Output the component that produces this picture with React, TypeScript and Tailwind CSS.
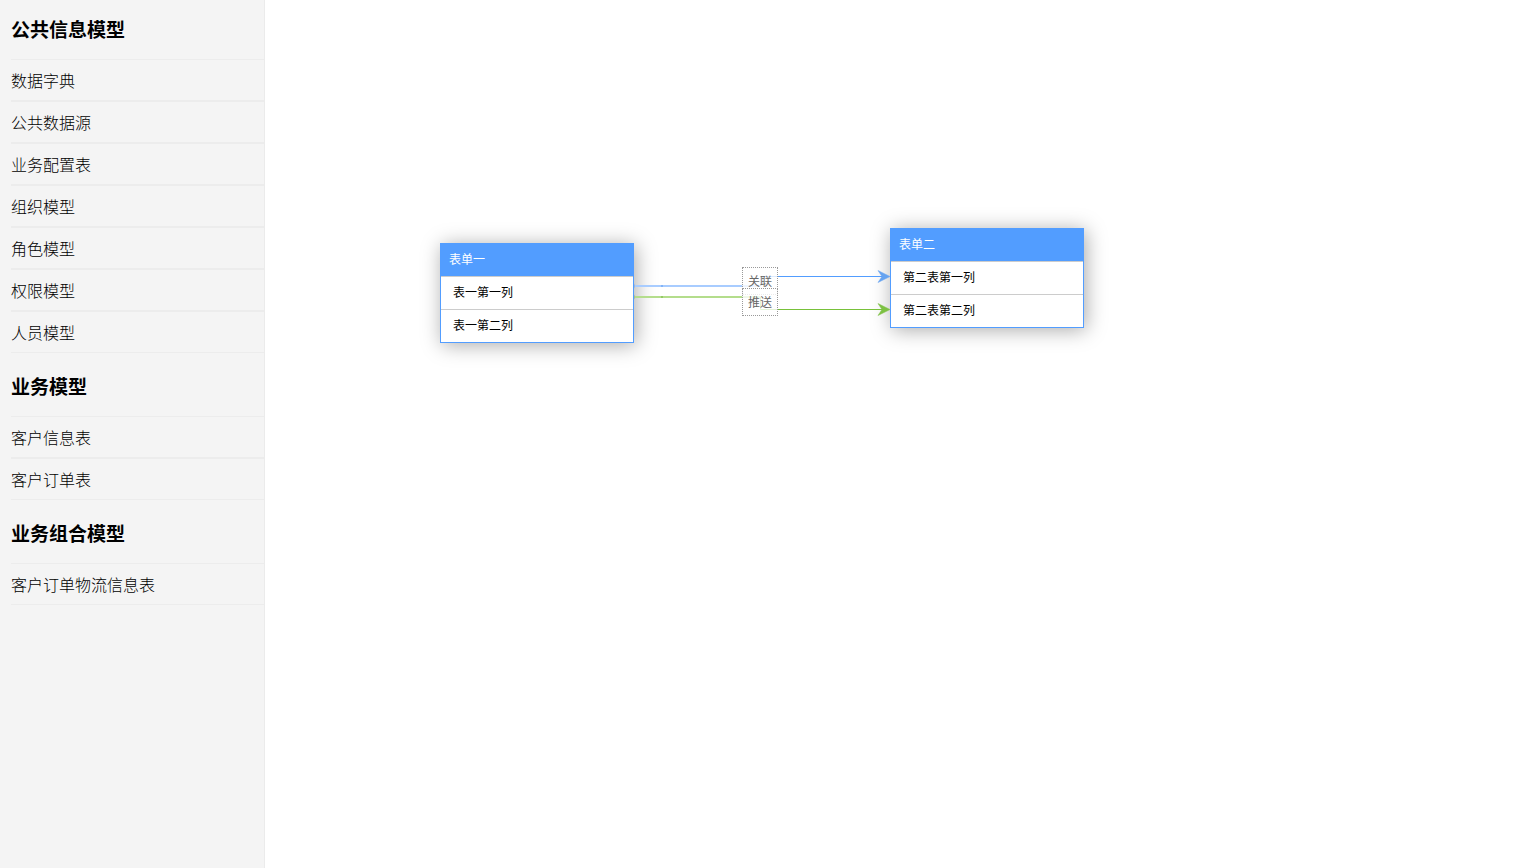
const groups = [
  {
    title: "公共信息模型",
    items: ["数据字典", "公共数据源", "业务配置表", "组织模型", "角色模型", "权限模型", "人员模型"],
  },
  { title: "业务模型", items: ["客户信息表", "客户订单表"] },
  { title: "业务组合模型", items: ["客户订单物流信息表"] },
]

function Sidebar() {
  return (
    <aside className="flex w-[265px] shrink-0 flex-col border-r border-[#ebebeb] bg-[#f4f4f4] pl-[11px]">
      {groups.map((group) => (
        <section key={group.title} className="flex flex-col pt-1 first:pt-0">
          <h3 className="flex h-[59px] items-center text-[19px] font-bold">{group.title}</h3>
          <ul className="flex flex-col">
            {group.items.map((item) => (
              <li key={item} className="flex h-[42px] items-center border-y border-[#ececec] text-base font-light">
                {item}
              </li>
            ))}
          </ul>
        </section>
      ))}
    </aside>
  )
}

type TableNodeProps = { title: string; columns: string[]; className: string }

function TableNode({ title, columns, className }: TableNodeProps) {
  return (
    <div
      className={`absolute flex w-[194px] flex-col border border-[#529dff] bg-white text-xs shadow-[2px_2px_19px_#aaaaaa] ${className}`}
    >
      <h4 className="flex h-8 items-center bg-[#529dff] pb-0.5 pl-2 text-white">{title}</h4>
      <ul className="flex flex-col">
        {columns.map((column) => (
          <li key={column} className="flex h-[33px] items-center border-t border-[#cccccc] pb-0.5 pl-3">
            {column}
          </li>
        ))}
      </ul>
    </div>
  )
}

function Connectors() {
  return (
    <svg className="absolute top-[260px] left-[369px]" width="256" height="60" fill="none" aria-hidden="true">
      {/* source half, drawn thick and light */}
      <path d="M0 26H126" stroke="#a8ccff" strokeWidth="2" />
      <path d="M0 37H126" stroke="#b4dd8c" strokeWidth="2" />
      <path d="M27 26h2" stroke="#82b4f8" strokeWidth="2" />
      <path d="M27 37h2" stroke="#94ca65" strokeWidth="2" />
      <path d="M0 23.500Q2 26 0 28.500z" fill="#a3b6d0" />
      <path d="M0 34.500Q2 37 0 39.500z" fill="#a9b99c" />
      {/* target half with arrow heads */}
      <path d="M126.500 26V16.500H250" stroke="#529dff" />
      <path d="M126.500 37V49.500H250" stroke="#78c13a" />
      <path d="M256 16.500L244 22.500L248 16.500L244 10.500z" fill="#66a3f0" stroke="#66a3f0" strokeWidth="0.500" />
      <path d="M256 49.500L244 55.500L248 49.500L244 43.500z" fill="#7dc143" stroke="#7dc143" strokeWidth="0.500" />
    </svg>
  )
}

function LinkLabel({ text, className }: { text: string; className: string }) {
  return (
    <span
      className={`absolute flex h-7 w-9 items-center justify-center border border-dotted border-[#999999] bg-white/80 text-xs text-[#666666] ${className}`}
    >
      {text}
    </span>
  )
}

export default function App() {
  return (
    <div className="flex min-h-screen bg-white font-['Noto_Sans_CJK_SC',sans-serif] text-black">
      <Sidebar />
      <main className="relative min-w-0 flex-1">
        <TableNode title="表单一" columns={["表一第一列", "表一第二列"]} className="top-[243px] left-[175px]" />
        <TableNode title="表单二" columns={["第二表第一列", "第二表第二列"]} className="top-[228px] left-[625px]" />
        <Connectors />
        <LinkLabel text="关联" className="top-[267px] left-[477px]" />
        <LinkLabel text="推送" className="top-[288px] left-[477px]" />
      </main>
    </div>
  )
}
